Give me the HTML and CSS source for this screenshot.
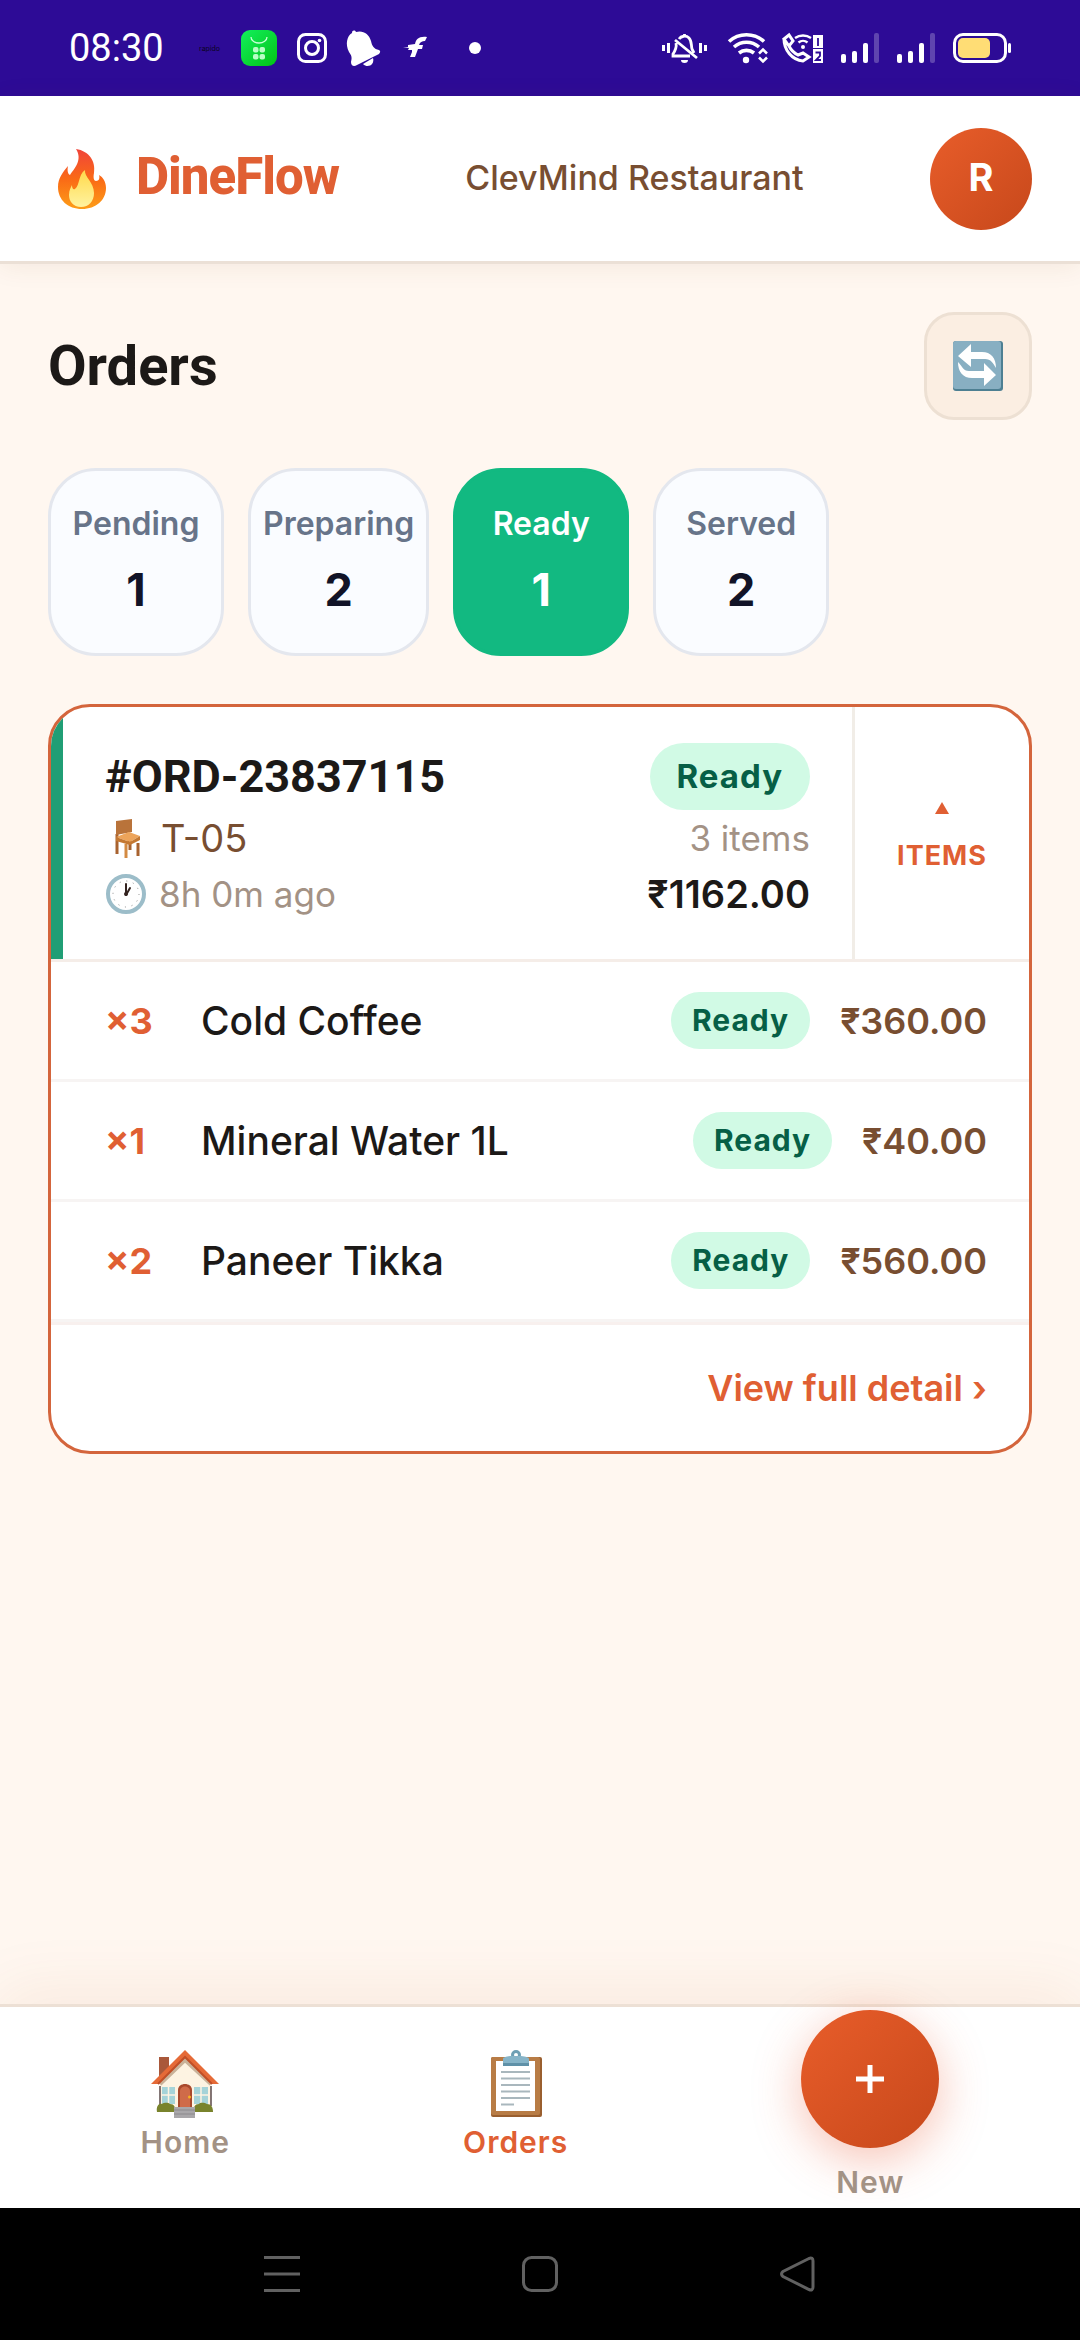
FILE: index.html
```html
<!DOCTYPE html>
<html lang="en">
<head>
  <meta charset="UTF-8" />
  <meta name="viewport" content="width=device-width, initial-scale=1.0" />
  <title>DineFlow - Orders</title>
  <link rel="stylesheet" href="styles.css">
</head>
<body>

<!-- Phone status bar -->
<div class="statusbar">
  <div class="status-left">
    <span class="time">08:30</span>
    <span class="rapido">rapido</span>
    <svg width="36" height="36" viewBox="0 0 36 36">
      <defs><linearGradient id="bag" x1="0" y1="0" x2="1" y2="1"><stop offset="0" stop-color="#12f05c"/><stop offset="1" stop-color="#02c216"/></linearGradient></defs>
      <rect width="36" height="36" rx="9" fill="url(#bag)"/>
      <path d="M10 7a8 6 0 0 0 16 0" fill="none" stroke="#c8ffd6" stroke-width="1.3"/>
      <g fill="#b9ffc6"><rect x="12" y="17" width="5.500" height="5.500" rx="2"/><rect x="18.500" y="17" width="5.500" height="5.500" rx="2"/><rect x="12" y="24" width="5.500" height="5.500" rx="2"/><rect x="18.500" y="24" width="5.500" height="5.500" rx="2"/></g>
    </svg>
    <svg width="30" height="30" viewBox="0 0 30 30" fill="none" stroke="#fff" stroke-width="3">
      <rect x="1.500" y="1.500" width="27" height="27" rx="7"/><circle cx="15" cy="15" r="6.500"/><circle cx="22.500" cy="7.500" r="1.800" fill="#fff" stroke="none"/>
    </svg>
    <svg width="34" height="36" viewBox="0 0 34 36" fill="#fff">
      <path d="M5 3c0-3 3-3 4-1 7-2 13 2 15 9 1 5 3 8 8 9 2 1 1 3 0 4L10 35c-3 2-6 1-6-3 1-4 1-6-2-10C-2 14 0 6 5 3z"/><path d="M16 34l10-6c2 6-5 11-10 6z"/>
    </svg>
    <svg width="48" height="36" viewBox="0 0 48 36" fill="#fff">
      <path d="M26 7c-8-1-11 2-12 7l-7 1v2H2l6 1-1 2h4v2l-2 5h5l3-8h4l1-4h-4c1-3 3-4 6-4z"/>
    </svg>
    <svg width="12" height="12" viewBox="0 0 12 12"><circle cx="6" cy="6" r="6" fill="#fff"/></svg>
  </div>
  <div class="status-right">
    <svg width="48" height="30" viewBox="0 0 48 30" fill="none" stroke="#fff" stroke-width="3">
      <path d="M1.500 12v6M6.500 10v10M38.500 10v10M43.500 12v6"/>
      <path d="M17 6c2-3 7-4 10-1 3 3 2 7 3 11l2 4M14 10c1 5-1 8-3 11v2h17M13 7l22 18M22.500 1v3" stroke-width="2.800"/>
      <path d="M19 27h7a3.500 3 0 0 1-7 0z" fill="#fff" stroke="none"/>
    </svg>
    <svg width="36" height="30" viewBox="0 0 36 30" fill="none" stroke="#fff" stroke-width="3.600">
      <path d="M1 8.500a26 26 0 0 1 35 0M6 14a19 19 0 0 1 25 0M11 20a12 12 0 0 1 15 0"/>
      <circle cx="18" cy="27" r="3.200" fill="#fff" stroke="none"/>
      <path d="M31 20.500l4-4 4 4M31 24.500l4 4 4-4" stroke-width="2.500"/>
    </svg>
    <svg width="41" height="30" viewBox="0 0 41 30" fill="none" stroke="#fff" stroke-width="3">
      <path d="M2 6l5-4 4 6-4 5zM2 6c0 11 8 21 19 22l6-4-6-4-5 2c-4-2-7-5-9-9"/>
      <path d="M13 5a14 14 0 0 1 16 0M16.500 9.500a7 7 0 0 1 9 0" stroke-width="2.400"/>
      <circle cx="21" cy="14" r="2" fill="#fff" stroke="none"/>
      <path d="M31 2h10v13H31zM31 16h10v14H31z" fill="#fff" stroke="none"/>
      <path d="M36 5v8M33.500 19.500h4.500v3.500l-4 4h5" stroke="#2d0b96" stroke-width="1.800"/>
    </svg>
    <svg class="signal" width="38" height="30" viewBox="0 0 38 30" fill="#fff"><rect y="21" width="5" height="9" rx="2"/><rect x="11" y="18" width="5" height="12" rx="2"/><rect x="22" y="10" width="5" height="20" rx="2"/><rect x="33" width="5" height="30" rx="2" opacity=".24"/></svg>
    <svg class="signal" width="38" height="30" viewBox="0 0 38 30" fill="#fff"><rect y="21" width="5" height="9" rx="2"/><rect x="11" y="18" width="5" height="12" rx="2"/><rect x="22" y="10" width="5" height="20" rx="2"/><rect x="33" width="5" height="30" rx="2" opacity=".24"/></svg>
    <svg width="58" height="30" viewBox="0 0 58 30">
      <rect x="1.500" y="1.500" width="51" height="27" rx="8.500" fill="none" stroke="#fff" stroke-width="3"/><rect x="5" y="5" width="32" height="20" rx="5" fill="#ffdd75"/><rect x="55" y="10" width="3" height="10" rx="1.500" fill="#fff"/>
    </svg>
  </div>
</div>

<!-- Header -->
<header class="topbar">
  <div class="brand">
    <svg width="60" height="60" viewBox="0 0 60 60">
      <defs><linearGradient id="fire" x1="0" y1="0" x2="0" y2="1"><stop offset="0" stop-color="#f0443a"/><stop offset=".5" stop-color="#fa6a16"/><stop offset="1" stop-color="#fd9d18"/></linearGradient>
      <linearGradient id="core" x1="0" y1="0" x2="0" y2="1"><stop offset="0" stop-color="#ffd94a"/><stop offset="1" stop-color="#fff3a0"/></linearGradient></defs>
      <path d="M24 0c13 2 20 12 18 24-1 5 0 8 2 8 3 0 4-3 3-6 4 2 7 7 7 13 0 12-10 21-24 21S6 51 6 38c0-9 5-15 10-21-1 5 0 8 2 9C22 20 31 11 24 0z" fill="url(#fire)"/>
      <path d="M33 21c-1 7 9 12 9 23 0 8-5 14-13 14s-12-6-12-12c0-5 2-8 3-10 0 3 1 5 3 4 5-4 3-14 10-19z" fill="url(#core)"/>
    </svg>
    <span class="brand-name">DineFlow</span>
  </div>
  <span class="restaurant">ClevMind Restaurant</span>
  <button class="avatar">R</button>
</header>

<main>
  <div class="page-head">
    <h1>Orders</h1>
    <button class="refresh" aria-label="Refresh">
      <svg width="50" height="50" viewBox="0 0 50 50">
        <rect width="50" height="50" rx="3" fill="#4d7f92"/><rect width="48" height="48" rx="3" fill="#88afc2"/>
        <g fill="#fff"><path d="M5 15L18 3v8h11c9 0 14 6 14 16-3-5-5-9-11-9H18v8z"/><path d="M43 34L31 45v-8H19C10 37 5 31 5 21c4 4 5 9 11 9h15v-8z"/></g>
      </svg>
    </button>
  </div>

  <!-- Status tabs -->
  <div class="tabs">
    <button class="tab"><span class="tab-label">Pending</span><span class="tab-count">1</span></button>
    <button class="tab"><span class="tab-label">Preparing</span><span class="tab-count">2</span></button>
    <button class="tab active"><span class="tab-label">Ready</span><span class="tab-count">1</span></button>
    <button class="tab"><span class="tab-label">Served</span><span class="tab-count">2</span></button>
  </div>

  <!-- Order card -->
  <section class="order-card">
    <div class="order-head">
      <div class="order-main">
        <div class="order-col">
          <h2 class="order-id">#ORD-23837115</h2>
          <div class="order-table">
            <svg width="44" height="42" viewBox="0 0 42 42">
              <path d="M11 17v10M23 16v9M11 27v10M32 26v13M24 23v10" stroke="#a8622f" stroke-width="3"/>
              <path d="M10 4l16-2v13l-16 3z" fill="#b9733a"/><path d="M10 20l13-5 11 4-10 6z" fill="#eda45a"/><path d="M10 20l14 5 10-6v4l-10 5-14-4z" fill="#c47832"/><path d="M20 27v14" stroke="#d38a42" stroke-width="3"/>
            </svg>
            <span>T-05</span>
          </div>
          <div class="order-time">
            <svg width="42" height="40" viewBox="0 0 40 40">
              <circle cx="20" cy="20" r="18" fill="#fff" stroke="#9cbdc9" stroke-width="4"/>
              <circle cx="20" cy="20" r="13" fill="none" stroke="#888" stroke-width="1" stroke-dasharray="1 5.800"/>
              <path d="M20 21V10M20 21l4-7" stroke="#33231f" stroke-width="2" stroke-linecap="round"/><circle cx="20" cy="20" r="2" fill="#33231f"/>
            </svg>
            <span>8h 0m ago</span>
          </div>
        </div>
        <div class="order-col order-col-right">
          <div><span class="badge">Ready</span></div>
          <div class="order-items">3 items</div>
          <div class="order-total">₹1162.00</div>
        </div>
      </div>
      <button class="items-toggle">
        <svg width="14" height="12" viewBox="0 0 14 12"><path d="M7 0l7 12H0z" fill="#e05f33"/></svg>
        <span>ITEMS</span>
      </button>
    </div>

    <ul class="items">
      <li><span class="qty">×3</span><span class="item-name">Cold Coffee</span><span class="badge badge-sm">Ready</span><span class="price">₹360.00</span></li>
      <li><span class="qty">×1</span><span class="item-name">Mineral Water 1L</span><span class="badge badge-sm">Ready</span><span class="price">₹40.00</span></li>
      <li><span class="qty">×2</span><span class="item-name">Paneer Tikka</span><span class="badge badge-sm">Ready</span><span class="price">₹560.00</span></li>
    </ul>

    <div class="order-foot"><a href="#">View full detail ›</a></div>
  </section>
</main>

<!-- Bottom navigation -->
<nav class="bottom-nav">
  <a href="#" class="nav-item">
    <svg width="68" height="68" viewBox="0 0 68 68">
      <path d="M8 7h10v24H8z" fill="#a9583a"/>
      <path d="M9 34L34 8l26 26v26H9z" fill="#fdf3e2"/><path d="M9 34L34 10l26 24" fill="none" stroke="#c9b299" stroke-width="4"/>
      <path d="M9 36v20M60 36v20" stroke="#5b4a4a" stroke-width="1.500"/>
      <path d="M0 34L34 0l34 34h-7L34 8 7 34z" fill="#e56a37"/><path d="M7 34L34 7l27 27" fill="none" stroke="#c04f27" stroke-width="2"/>
      <path d="M11 37h13v17H11zM43 37h14v17H43z" fill="#a5d3d8"/><path d="M17.500 37v17M11 45h13M50 37v17M43 45h14" stroke="#fdf3e2" stroke-width="1.500"/>
      <path d="M27 58V40c0-8 14-8 14 0v18z" fill="#a8492d"/><path d="M29 58V41c0-6 10-6 10 0v17z" fill="#cf6b49"/><circle cx="38.500" cy="47" r="1.500" fill="#f6b51e"/>
      <path d="M6 62c-1-6 2-9 5-8 3-2 7-1 8 0 4 0 6 3 5 8zM43 62c-1-5 1-8 5-8 2-2 6-1 8 0 4 0 6 3 6 8z" fill="#79832c"/>
      <path d="M23 57h21v11H23z" fill="#a9a7aa"/><path d="M23 60h21M23 64h21" stroke="#8b898c" stroke-width="1"/>
    </svg>
    <span>Home</span>
  </a>
  <a href="#" class="nav-item active">
    <svg width="68" height="68" viewBox="0 0 68 68">
      <rect x="9" y="7" width="51" height="60" rx="2" fill="#9a5f2f"/><rect x="9" y="7" width="49" height="58" rx="2" fill="#b87c45"/>
      <rect x="14" y="11" width="39" height="50" fill="#fff"/>
      <path d="M19 22h29M19 28.500h29M19 35h29M19 41.500h29M19 48h29M19 54.500h13" stroke="#a9b7bd" stroke-width="2"/>
      <circle cx="34" cy="5" r="3.500" fill="none" stroke="#6e9fb4" stroke-width="3"/><path d="M21 15V9c0-2 3-2 7-3h11c5 1 8 1 8 3v6z" fill="#86b4c8"/><path d="M21 13h26v3H21z" fill="#5f91a8"/>
    </svg>
    <span>Orders</span>
  </a>
  <a href="#" class="nav-item nav-new">
    <span class="fab"><svg width="28" height="28" viewBox="0 0 28 28"><path d="M14 0v28M0 14h28" stroke="#fff" stroke-width="5"/></svg></span>
    <span>New</span>
  </a>
</nav>

<!-- Phone system buttons -->
<div class="sysbar">
  <svg width="36" height="36" viewBox="0 0 36 36"><path d="M0 1.500h36M0 18h36M0 34.500h36"/></svg>
  <svg width="36" height="36" viewBox="0 0 36 36"><rect x="1.500" y="1.500" width="33" height="33" rx="8"/></svg>
  <svg width="36" height="36" viewBox="0 0 36 36"><path d="M29 2.500L3 15.500q-3 2.500 0 5L29 33.500q4 1.500 4-2.500V5q0-4-4-2.500z"/></svg>
</div>

</body>
</html>
```
FILE: styles.css
```css
* {
  box-sizing: border-box;
}
body {
  margin: 0;
  min-height: 100vh;
  display: flex;
  flex-direction: column;
  background: #fff7f0;
  color: #1c1917;
  font-family: Inter, "Noto Sans", sans-serif;
}
button {
  font-family: inherit;
  padding: 0;
  border: none;
  background: none;
  color: inherit;
  cursor: pointer;
}
a {
  text-decoration: none;
}
svg {
  display: block;
  flex-shrink: 0;
  overflow: visible;
}

/* status bar */
.statusbar {
  height: 96px;
  padding: 0 69px;
  display: flex;
  align-items: center;
  justify-content: space-between;
  background: #2d0b96;
}
.status-left {
  display: flex;
  align-items: center;
  gap: 20px;
}
.status-right {
  display: flex;
  align-items: center;
  gap: 18px;
}
.time {
  width: 110px;
  font-family: Roboto, sans-serif;
  font-size: 38px;
  color: #fff;
}
.rapido {
  width: 22px;
  font-size: 7px;
  color: #0b0420;
}

/* header */
.topbar {
  display: flex;
  align-items: center;
  justify-content: space-between;
  padding: 32px 48px 31px;
  background: #fff;
  border-bottom: 3px solid #ebe0d6;
  box-shadow: 0 3px 24px rgba(120, 60, 20, 0.08);
}
.brand {
  display: flex;
  align-items: center;
  gap: 24px;
}
.brand svg {
  margin-left: 4px;
}
.brand-name,
.restaurant {
  padding-bottom: 4px;
}
.brand-name {
  font-family: Roboto, sans-serif;
  font-size: 51px;
  line-height: 56px;
  font-weight: 800;
  letter-spacing: -1px;
  color: #e05f33;
}
.restaurant {
  font-size: 34px;
  font-weight: 500;
  color: #784e31;
}
.avatar {
  width: 102px;
  height: 102px;
  padding-bottom: 4px;
  border-radius: 50%;
  background: linear-gradient(135deg, #e85d2a, #c7481b);
  color: #fff;
  font-size: 38px;
  font-weight: 700;
}

/* orders page */
main {
  flex: 1;
  padding: 48px;
}
.page-head {
  display: flex;
  align-items: center;
  justify-content: space-between;
  margin-bottom: 48px;
}
h1 {
  margin: 0;
  font-family: Roboto, sans-serif;
  font-size: 56px;
  font-weight: 700;
}
.refresh {
  width: 108px;
  height: 108px;
  display: flex;
  align-items: center;
  justify-content: center;
  background: #fbeee2;
  border: 3px solid #ede0d3;
  border-radius: 30px;
}
.tabs {
  display: flex;
  gap: 24px;
  margin-bottom: 48px;
}
.tab {
  min-width: 176px;
  padding: 33px 12px;
  display: flex;
  flex-direction: column;
  align-items: center;
  gap: 16px;
  background: #fafcff;
  border: 3px solid #e4e7ee;
  border-radius: 48px;
}
.tab-label {
  font-size: 32px;
  line-height: 40px;
  font-weight: 600;
  color: #677489;
}
.tab-count {
  font-size: 45px;
  line-height: 60px;
  font-weight: 700;
  color: #111327;
}
.tab.active {
  background: #12b981;
  border-color: #12b981;
}
.tab.active span {
  color: #fff;
}

/* order card */
.order-card {
  background: #fff;
  border: 3px solid #d4653c;
  border-radius: 42px;
  overflow: hidden;
}
.order-head {
  display: flex;
  border-bottom: 3px solid #f5ede8;
}
.order-main {
  flex: 1;
  display: flex;
  justify-content: space-between;
  padding: 36px 42px 37px;
  border-left: 12px solid #209e75;
}
.order-col {
  display: flex;
  flex-direction: column;
}
.order-col > * {
  height: 56px;
  margin: 0;
  display: flex;
  align-items: center;
  gap: 12px;
}
.order-col > :first-child {
  height: 67px;
}
.order-col-right {
  align-items: flex-end;
}
.order-id {
  font-family: Roboto, sans-serif;
  font-size: 45px;
  font-weight: 700;
}
.order-table {
  font-size: 38px;
  color: #784e31;
}
.order-time,
.order-items {
  font-size: 35px;
  color: #a39285;
}
.order-total {
  font-size: 38px;
  font-weight: 600;
}
.badge {
  padding: 0 27px;
  border-radius: 60px;
  background: #d1fae5;
  color: #065f46;
  font-size: 33px;
  line-height: 67px;
  font-weight: 700;
  letter-spacing: 1px;
}
.badge-sm {
  padding: 0 21px;
  font-size: 30px;
  line-height: 57px;
}
.items-toggle {
  width: 177px;
  padding-top: 10px;
  display: flex;
  flex-direction: column;
  align-items: center;
  justify-content: center;
  gap: 24px;
  border-left: 3px solid #f1ede7;
  color: #e05f33;
  font-size: 27px;
  line-height: 36px;
  font-weight: 700;
  letter-spacing: 1px;
}
.items {
  list-style: none;
  margin: 0;
  padding: 0;
  border-bottom: 3px solid #f8f0ee;
}
.items li {
  height: 120px;
  padding: 0 42px 0 54px;
  display: flex;
  align-items: center;
  gap: 30px;
  border-bottom: 3px solid #f7f4f3;
}
.qty {
  width: 66px;
  font-size: 36px;
  font-weight: 700;
  color: #e05f33;
}
.item-name {
  flex: 1;
  font-size: 39px;
  font-weight: 500;
}
.price {
  font-size: 36px;
  font-weight: 600;
  color: #784e31;
}
.order-foot {
  padding: 0 42px;
  text-align: right;
  font-size: 36px;
  line-height: 126px;
}
.order-foot a {
  font-weight: 600;
  color: #e05f33;
}

/* bottom navigation */
.bottom-nav {
  display: flex;
  align-items: center;
  justify-content: space-around;
  padding: 3px 24px 4px;
  background: #fff;
  border-top: 3px solid #ede0d5;
  box-shadow: 0 -12px 60px rgba(180, 80, 30, 0.08);
}
.nav-item {
  display: flex;
  flex-direction: column;
  align-items: center;
  gap: 6px;
  padding-bottom: 4px;
  font-size: 30px;
  line-height: 36px;
  font-weight: 600;
  letter-spacing: 1px;
  color: #a39285;
}
.nav-item.active {
  color: #e05f33;
}
.nav-new {
  gap: 16px;
}
.fab {
  width: 138px;
  height: 138px;
  display: flex;
  align-items: center;
  justify-content: center;
  border-radius: 50%;
  background: linear-gradient(135deg, #e85d2a, #c7481b);
  box-shadow: 0 12px 48px rgba(232, 80, 40, 0.35);
}

/* system buttons */
.sysbar {
  height: 132px;
  display: flex;
  align-items: center;
  justify-content: center;
  gap: 222px;
  background: #000;
}
.sysbar svg {
  fill: none;
  stroke: #616161;
  stroke-width: 3;
}
```
